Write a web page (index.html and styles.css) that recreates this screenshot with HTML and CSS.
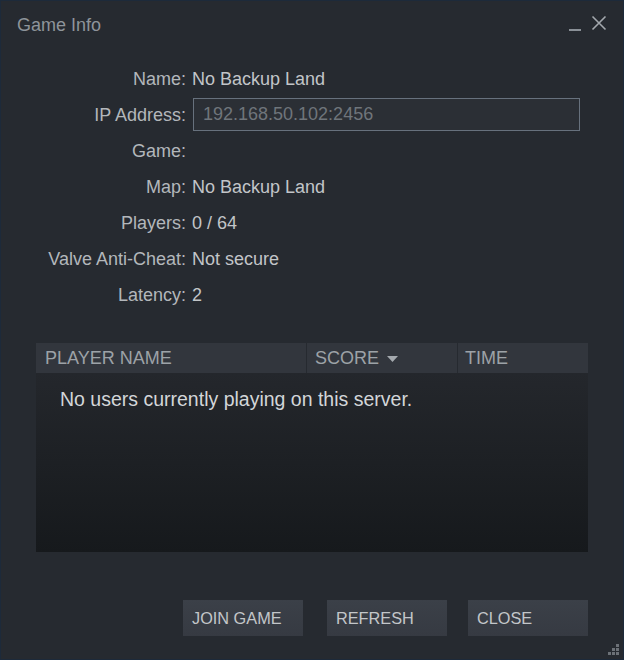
FILE: index.html
```html
<!DOCTYPE html>
<html>
<head>
<meta charset="utf-8">
<link rel="stylesheet" href="styles.css">
</head>
<body>
<div class="window">
  <div class="titlebar">
    <span class="title">Game Info</span>
    <div class="controls">
      <svg class="min" width="14" height="14" viewBox="0 0 14 14"><rect x="1" y="11" width="12" height="2" fill="#8a9097"/></svg>
      <svg class="close" width="16" height="16" viewBox="0 0 16 16"><path d="M1.5 1.5 L14.5 14.5 M14.5 1.5 L1.5 14.5" stroke="#a3a8ad" stroke-width="1.6" fill="none"/></svg>
    </div>
  </div>
  <div class="info">
    <div class="label">Name:</div><div class="value">No Backup Land</div>
    <div class="label">IP Address:</div><div class="value"><div class="ipbox">192.168.50.102:2456</div></div>
    <div class="label">Game:</div><div class="value"></div>
    <div class="label">Map:</div><div class="value">No Backup Land</div>
    <div class="label">Players:</div><div class="value">0 / 64</div>
    <div class="label">Valve Anti-Cheat:</div><div class="value">Not secure</div>
    <div class="label">Latency:</div><div class="value">2</div>
  </div>
  <div class="table">
    <div class="thead">
      <div class="th c1">PLAYER NAME</div>
      <div class="th c2">SCORE <svg class="caret" width="11" height="6" viewBox="0 0 11 6"><path d="M0 0 H11 L5.5 6 Z" fill="#a4a9ae"/></svg></div>
      <div class="th c3">TIME</div>
    </div>
    <div class="tbody">
      <div class="empty">No users currently playing on this server.</div>
    </div>
  </div>
  <div class="buttons">
    <div class="btn">JOIN GAME</div>
    <div class="btn b2">REFRESH</div>
    <div class="btn b3">CLOSE</div>
  </div>
  <svg class="grip" width="14" height="14" viewBox="0 0 14 14">
    <rect x="10" y="2" width="3" height="3" fill="#6c7177"/>
    <rect x="6" y="6" width="3" height="3" fill="#6c7177"/>
    <rect x="10" y="6" width="3" height="3" fill="#6c7177"/>
    <rect x="2" y="10" width="3" height="3" fill="#6c7177"/>
    <rect x="6" y="10" width="3" height="3" fill="#6c7177"/>
    <rect x="10" y="10" width="3" height="3" fill="#6c7177"/>
  </svg>
</div>
</body>
</html>
```
FILE: styles.css
```css
* { box-sizing: border-box; }
html, body { margin: 0; padding: 0; background: #1b2838; }
body { font-family: "Liberation Sans", Arial, sans-serif; }
.window {
  position: relative;
  width: 624px;
  height: 660px;
  background: #262a30;
  border: 1px solid #1d2a3a;
  color: #c2c5c8;
  overflow: hidden;
}
.titlebar {
  display: flex;
  justify-content: space-between;
  align-items: flex-start;
  height: 50px;
  padding: 14px 16px 0 16px;
}
.title { font-size: 18px; color: #8e949a; }
.controls { display: flex; align-items: flex-end; gap: 9px; margin-top: 0; }
.controls .min { margin-bottom: -1px; }
.info {
  display: grid;
  grid-template-columns: 185px 388px;
  grid-auto-rows: 36px;
  column-gap: 6px;
  align-items: center;
  margin-top: 10px;
  font-size: 18px;
}
.label { text-align: right; color: #b3b7bb; }
.value { color: #c2c5c8; }
.ipbox {
  height: 33px;
  border: 1px solid #67717d;
  background: #2b2f35;
  color: #6f757b;
  padding: 0 9px;
  display: flex;
  align-items: center;
  margin-left: 1px;
  margin-top: -1px;
}
.table {
  margin: 30px 0 0 35px;
  width: 552px;
}
.thead {
  display: flex;
  height: 30px;
  background: #32363d;
  align-items: center;
  font-size: 18px;
  color: #9da2a7;
}
.th { padding-left: 9px; display: flex; align-items: center; height: 100%; }
.c1 { width: 270px; }
.c2 { width: 151px; border-left: 1px solid #262a30; padding-left: 8px; }
.c3 { flex: 1; border-left: 1px solid #262a30; padding-left: 7px; }
.caret { margin-left: 8px; margin-top: 1px; }
.tbody {
  height: 179px;
  background: linear-gradient(#24272c, #16191c);
  padding: 15px 0 0 24px;
}
.empty { font-size: 19.5px; color: #d3d6d9; }
.buttons {
  display: flex;
  justify-content: flex-end;
  padding-right: 35px;
  margin-top: 48px;
}
.b2 { margin-left: 24px; }
.b3 { margin-left: 21px; }
.btn {
  width: 120px;
  height: 36px;
  background: linear-gradient(#3b4048, #363a42);
  color: #c3c6c9;
  font-size: 16.3px;
  padding-left: 9px;
  display: flex;
  align-items: center;
}
.grip { position: absolute; right: 3px; bottom: 3px; }
```
